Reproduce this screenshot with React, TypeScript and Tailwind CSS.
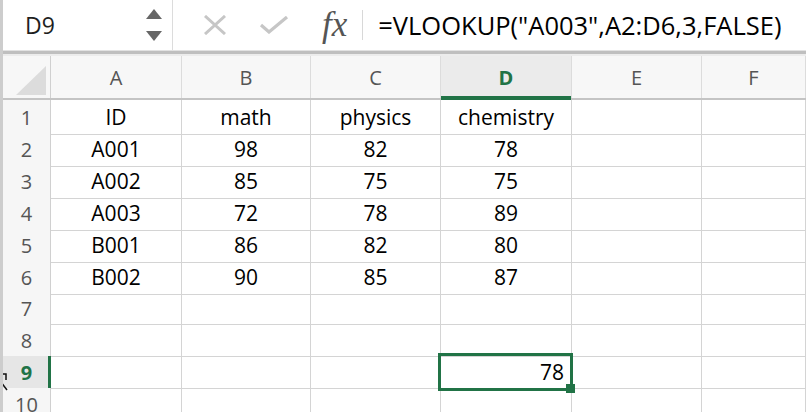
import React from "react";

const cols = ["A", "B", "C", "D", "E", "F"];

const data: string[][] = [
  ["ID", "math", "physics", "chemistry"],
  ["A001", "98", "82", "78"],
  ["A002", "85", "75", "75"],
  ["A003", "72", "78", "89"],
  ["B001", "86", "82", "80"],
  ["B002", "90", "85", "87"],
  [],
  [],
  [],
  [],
];

const grid = "grid grid-cols-[48px_131px_129px_130px_131px_130px_1fr]";

function NameBox() {
  return (
    <div className="w-[170px] h-full flex items-center justify-between pl-[22px] pr-[10px] border-r border-[#dcdcdc]">
      <span className="text-[23px] text-[#1f1f1f]">D9</span>
      <div className="flex flex-col items-center gap-[12px]">
        <svg width="16" height="10" viewBox="0 0 16 10">
          <path d="M8 0 L16 10 L0 10 Z" fill="#666" />
        </svg>
        <svg width="16" height="10" viewBox="0 0 16 10">
          <path d="M0 0 L16 0 L8 10 Z" fill="#666" />
        </svg>
      </div>
    </div>
  );
}

function FormulaBar() {
  return (
    <div className="h-[51px] flex items-center bg-white border-b border-[#e2e2e2]">
      <NameBox />
      <div className="flex items-center h-full">
        <svg className="ml-[30px]" width="24" height="20" viewBox="0 0 24 20">
          <path d="M2 1 L22 19 M22 1 L2 19" stroke="#c6c6c6" strokeWidth="3" />
        </svg>
        <svg className="ml-[32px]" width="30" height="18" viewBox="0 0 30 18">
          <path d="M2 9 L10 16 L28 1" stroke="#c6c6c6" strokeWidth="3.2" fill="none" />
        </svg>
        <span className="ml-[33px] font-['Liberation_Serif',serif] italic text-[35px] text-[#555] leading-none -mt-[2px]">
          fx
        </span>
        <div className="ml-[15px] w-px h-[30px] bg-[#d8d8d8]" />
        <span className="ml-[15px] text-[25.5px] text-black">
          =VLOOKUP("A003",A2:D6,3,FALSE)
        </span>
      </div>
    </div>
  );
}

function HeaderRow() {
  return (
    <div className={`${grid} h-[44px] border-b-2 border-[#c4c4c4] bg-[#f7f7f7]`}>
      <div className="relative border-r border-[#d0d0d0]">
        <svg className="absolute left-[13px] top-[10px]" width="30" height="29" viewBox="0 0 30 29">
          <path d="M30 0 L30 29 L0 29 Z" fill="#dcdcdc" />
        </svg>
      </div>
      {cols.map((c) => (
        <div
          key={c}
          className={`relative flex items-center justify-center pt-[2px] border-r border-[#dcdcdc] text-[20px] ${
            c === "D" ? "bg-[#ebebeb] text-[#217346] font-bold" : "text-[#555]"
          }`}
        >
          {c}
          {c === "D" && <div className="absolute left-0 right-0 -bottom-[2px] h-[4px] bg-[#217346]" />}
        </div>
      ))}
    </div>
  );
}

function Row({ n, cells }: { n: number; cells: string[] }) {
  const active = n === 9;
  return (
    <div className={`${grid} h-[32px]`}>
      <div
        className={`relative flex items-center justify-center pt-[2px] border-r border-b border-[#d0d0d0] text-[20px] ${
          active ? "bg-[#e6e6e6] text-[#217346] font-bold" : "bg-[#f6f6f6] text-[#555]"
        }`}
      >
        {n}
        {active && <div className="absolute -right-px top-0 bottom-0 w-[3px] bg-[#217346]" />}
      </div>
      {cols.map((c, i) => (
        <div
          key={c}
          className="relative flex items-center justify-center pt-[2px] border-r border-b border-[#d4d4d4] text-[21px] text-black"
        >
          {cells[i] ?? ""}
          {active && c === "D" && (
            <>
              <span className="absolute right-[7px]">78</span>
              <div className="absolute -left-[3px] -top-[3px] -right-[2px] -bottom-[3px] border-[3px] border-[#217346] z-10" />
              <div className="absolute -right-[4px] -bottom-[5px] w-[9px] h-[9px] bg-[#217346] z-20" />
            </>
          )}
        </div>
      ))}
    </div>
  );
}

export default function App() {
  return (
    <div className="relative w-[806px] h-[412px] overflow-hidden bg-white border-l-[3px] border-[#cdcdcd] font-['Open_Sans',sans-serif]">
      <FormulaBar />
      <div className="h-[3px] bg-[#bfbfbf]" />
      <div className="h-[2px] bg-[#ececec]" />
      <HeaderRow />
      {data.map((cells, i) => (
        <Row key={i} n={i + 1} cells={cells} />
      ))}
      <svg className="absolute -left-[3px] top-[372px]" width="8" height="40" viewBox="0 0 8 40">
        <path d="M0 2 L6 2 L6 8 M1 10 L7 18" stroke="#111" strokeWidth="1.5" fill="none" />
      </svg>
    </div>
  );
}
